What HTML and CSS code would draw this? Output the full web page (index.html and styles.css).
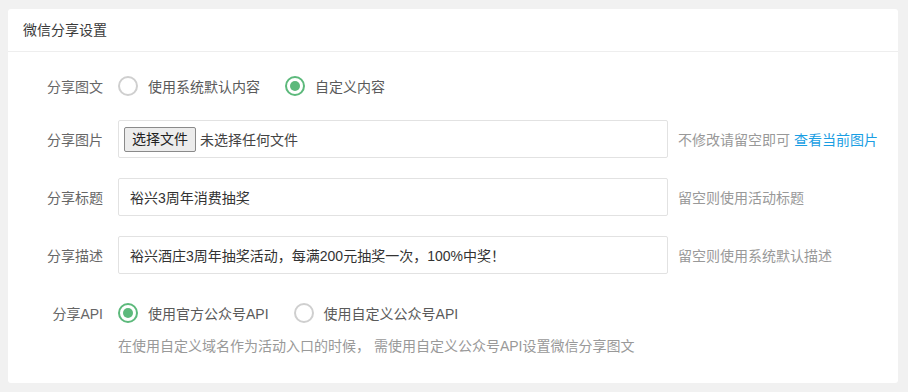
FILE: index.html
```html
<!DOCTYPE html>
<html lang="zh-CN">
<head>
<meta charset="utf-8">
<title>微信分享设置</title>
<link rel="stylesheet" href="styles.css">
</head>
<body>
<div class="card">
  <div class="card-header">微信分享设置</div>
  <div class="card-body">
    <div class="row row-first">
      <div class="label">分享图文</div>
      <div class="field">
        <label class="radio"><span class="dot"></span><span class="rtext">使用系统默认内容</span></label>
        <label class="radio checked"><span class="dot"></span><span class="rtext">自定义内容</span></label>
      </div>
    </div>
    <div class="row">
      <div class="label">分享图片</div>
      <div class="input file"><span class="file-btn">选择文件</span><span class="file-name">未选择任何文件</span></div>
      <div class="hint">不修改请留空即可 <a class="link">查看当前图片</a></div>
    </div>
    <div class="row">
      <div class="label">分享标题</div>
      <div class="input">裕兴3周年消费抽奖</div>
      <div class="hint">留空则使用活动标题</div>
    </div>
    <div class="row">
      <div class="label">分享描述</div>
      <div class="input">裕兴酒庄3周年抽奖活动，每满200元抽奖一次，100%中奖！</div>
      <div class="hint">留空则使用系统默认描述</div>
    </div>
    <div class="row row-api">
      <div class="label">分享API</div>
      <div class="field">
        <label class="radio checked"><span class="dot"></span><span class="rtext">使用官方公众号API</span></label>
        <label class="radio"><span class="dot"></span><span class="rtext">使用自定义公众号API</span></label>
      </div>
    </div>
    <div class="help">在使用自定义域名作为活动入口的时候， 需使用自定义公众号API设置微信分享图文</div>
  </div>
</div>
</body>
</html>
```

FILE: styles.css
```css
* { box-sizing: border-box; }
html, body { margin: 0; padding: 0; }
body {
  background: #f1f1f1;
  padding: 9px 10px 8px 8px;
  font-family: "Liberation Sans", "Noto Sans CJK SC", sans-serif;
  font-size: 14px;
  color: #333;
}
.card {
  width: 890px;
  background: #fff;
  border-radius: 3px;
}
.card-header {
  height: 43px;
  line-height: 42px;
  padding-left: 15px;
  border-bottom: 1px solid #eeeeee;
  color: #3a3a3a;
}
.card-body {
  padding: 15px 0 27px 0;
}
.row {
  display: flex;
  align-items: center;
  height: 38px;
  margin-bottom: 20px;
}
.row-first { margin-bottom: 15px; }
.row-api { margin-bottom: 4px; }
.label {
  width: 95px;
  text-align: right;
  color: #666;
  flex-shrink: 0;
}
.field {
  margin-left: 15px;
  display: flex;
  align-items: center;
  gap: 25px;
}
.radio {
  display: flex;
  align-items: center;
  color: #5a5a5a;
}
.dot {
  width: 20px;
  height: 20px;
  border: 2px solid #cfcfcf;
  border-radius: 50%;
  margin-right: 10px;
  position: relative;
}
.radio.checked .dot { border-color: #5cb97b; }
.radio.checked .dot::after {
  content: "";
  position: absolute;
  left: 3px;
  top: 3px;
  width: 10px;
  height: 10px;
  border-radius: 50%;
  background: #5cb97b;
}
.input {
  margin-left: 15px;
  width: 550px;
  height: 38px;
  border: 1px solid #e2e2e2;
  border-radius: 2px;
  padding: 0 11px;
  display: flex;
  align-items: center;
  color: #333;
  white-space: nowrap;
}
.input.file { padding-left: 5px; }
.file-btn {
  display: inline-block;
  height: 25px;
  line-height: 22px;
  padding: 0 7px;
  border: 1px solid #8a8a8a;
  border-radius: 2px;
  background: #ececec;
  color: #222;
  margin-right: 4px;
}
.file-name { color: #444; }
.hint {
  margin-left: 10px;
  color: #999;
  white-space: nowrap;
}
.link { color: #1a9ee3; text-decoration: none; }
.help {
  margin-left: 110px;
  height: 20px;
  line-height: 20px;
  color: #999;
}
```
